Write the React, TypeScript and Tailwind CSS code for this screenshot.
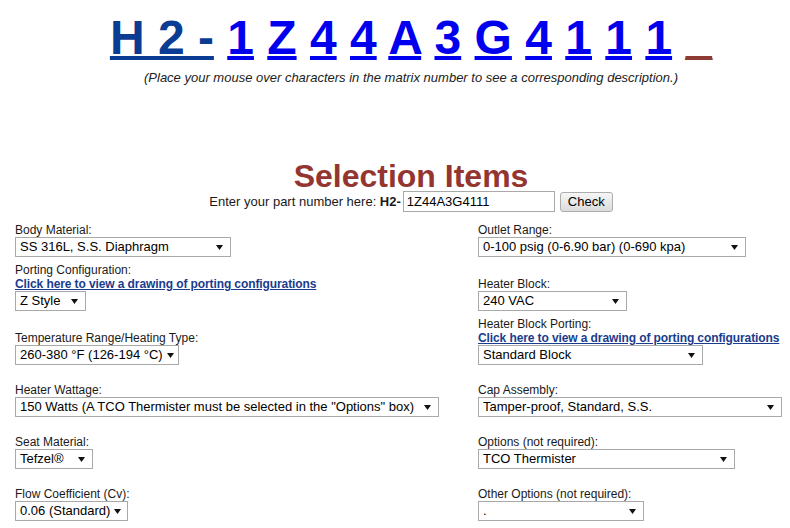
import React from 'react';

// Matrix number characters shown at the top
const matrixChars = ['1', 'Z', '4', '4', 'A', '3', 'G', '4', '1', '1', '1'];

function FakeSelect({ value, width }: { value: string; width: string }) {
  return (
    <div
      className={`flex h-[20px] items-center justify-between border border-[#a9a9a9] bg-white pl-[4px] pr-[7px] text-[13px] leading-[18px] text-black ${width}`}
    >
      <span className="whitespace-nowrap">{value}</span>
      <svg width="7" height="5" viewBox="0 0 7 5" className="ml-[4px] shrink-0">
        <path d="M0 0h7L3.5 5z" fill="#111" />
      </svg>
    </div>
  );
}

function Field({
  label,
  value,
  width,
  link,
}: {
  label: string;
  value: string;
  width: string;
  link?: boolean;
}) {
  return (
    <div className="flex flex-col items-start">
      <div className="text-[12px] leading-[14px] text-[#1a1a1a]">{label}</div>
      {link && (
        <a href="#" className="text-[12px] font-bold leading-[14px] tracking-[-0.1px] text-[#1a3c8c] underline">
          Click here to view a drawing of porting configurations
        </a>
      )}
      <FakeSelect value={value} width={width} />
    </div>
  );
}

function Row({ left, right, className = '' }: { left: React.ReactNode; right: React.ReactNode; className?: string }) {
  return (
    <div className={`grid grid-cols-[478px_1fr] items-end ${className}`}>
      <div className="pl-[15px]">{left}</div>
      <div>{right}</div>
    </div>
  );
}

export default function App() {
  return (
    <div className="h-[528px] w-[790px] overflow-hidden bg-white font-['Liberation_Sans',Arial,sans-serif] text-[#1a1a1a]">
      {/* Matrix number header */}
      <div className="pl-[32px] pt-[10px] text-center text-[48px] font-bold leading-[55px] whitespace-nowrap">
        <a href="#" className="text-[#0b3c94] underline decoration-[4px]">H 2 -</a>{' '}
        {matrixChars.map((c, i) => (
          <React.Fragment key={i}>
            <a href="#" className="text-[#0000ee] underline decoration-[4px]">{c}</a>{' '}
          </React.Fragment>
        ))}
        <span className="text-[#8e3b33] underline decoration-[4px]">_</span>
      </div>
      <p className="mt-[5px] pl-[32px] text-center text-[13px] italic leading-[15px] text-[#222]">
        (Place your mouse over characters in the matrix number to see a corresponding description.)
      </p>

      {/* Selection items */}
      <h2 className="mt-[78px] pl-[32px] text-center text-[32px] font-bold leading-[27px] text-[#933631]">
        Selection Items
      </h2>
      <div className="mt-[1px] flex items-center justify-center pl-[32px] text-[13px] text-[#1a1a1a]">
        <span>Enter your part number here:&nbsp;</span>
        <b>H2-</b>
        <input
          readOnly
          value="1Z44A3G4111"
          className="ml-[2px] h-[21px] w-[152px] border border-[#a9a9a9] bg-white px-[3px] text-[13px] text-black outline-none"
        />
        <button className="ml-[5px] h-[20px] rounded-[3px] border border-[#adadad] bg-gradient-to-b from-[#f6f6f6] to-[#dcdcdc] px-[7px] text-[13px] leading-[18px] text-black">
          Check
        </button>
      </div>

      <div className="mt-[11px] flex flex-col">
        <Row
          left={<Field label="Body Material:" value="SS 316L, S.S. Diaphragm" width="w-[216px]" />}
          right={<Field label="Outlet Range:" value="0-100 psig (0-6.90 bar) (0-690 kpa)" width="w-[268px]" />}
        />
        <Row
          className="mt-[6px]"
          left={<Field label="Porting Configuration:" value="Z Style" width="w-[71px]" link />}
          right={<Field label="Heater Block:" value="240 VAC" width="w-[149px]" />}
        />
        <Row
          className="mt-[6px]"
          left={<Field label="Temperature Range/Heating Type:" value="260-380 °F (126-194 °C)" width="w-[164px]" />}
          right={<Field label="Heater Block Porting:" value="Standard Block" width="w-[225px]" link />}
        />
        <Row
          className="mt-[18px]"
          left={
            <Field
              label="Heater Wattage:"
              value={'150 Watts (A TCO Thermister must be selected in the "Options" box)'}
              width="w-[424px]"
            />
          }
          right={<Field label="Cap Assembly:" value="Tamper-proof, Standard, S.S." width="w-[304px]" />}
        />
        <Row
          className="mt-[18px]"
          left={<Field label="Seat Material:" value="Tefzel®" width="w-[78px]" />}
          right={<Field label="Options (not required):" value="TCO Thermister" width="w-[257px]" />}
        />
        <Row
          className="mt-[18px]"
          left={<Field label="Flow Coefficient (Cv):" value="0.06 (Standard)" width="w-[113px]" />}
          right={<Field label="Other Options (not required):" value="." width="w-[166px]" />}
        />
      </div>
    </div>
  );
}
